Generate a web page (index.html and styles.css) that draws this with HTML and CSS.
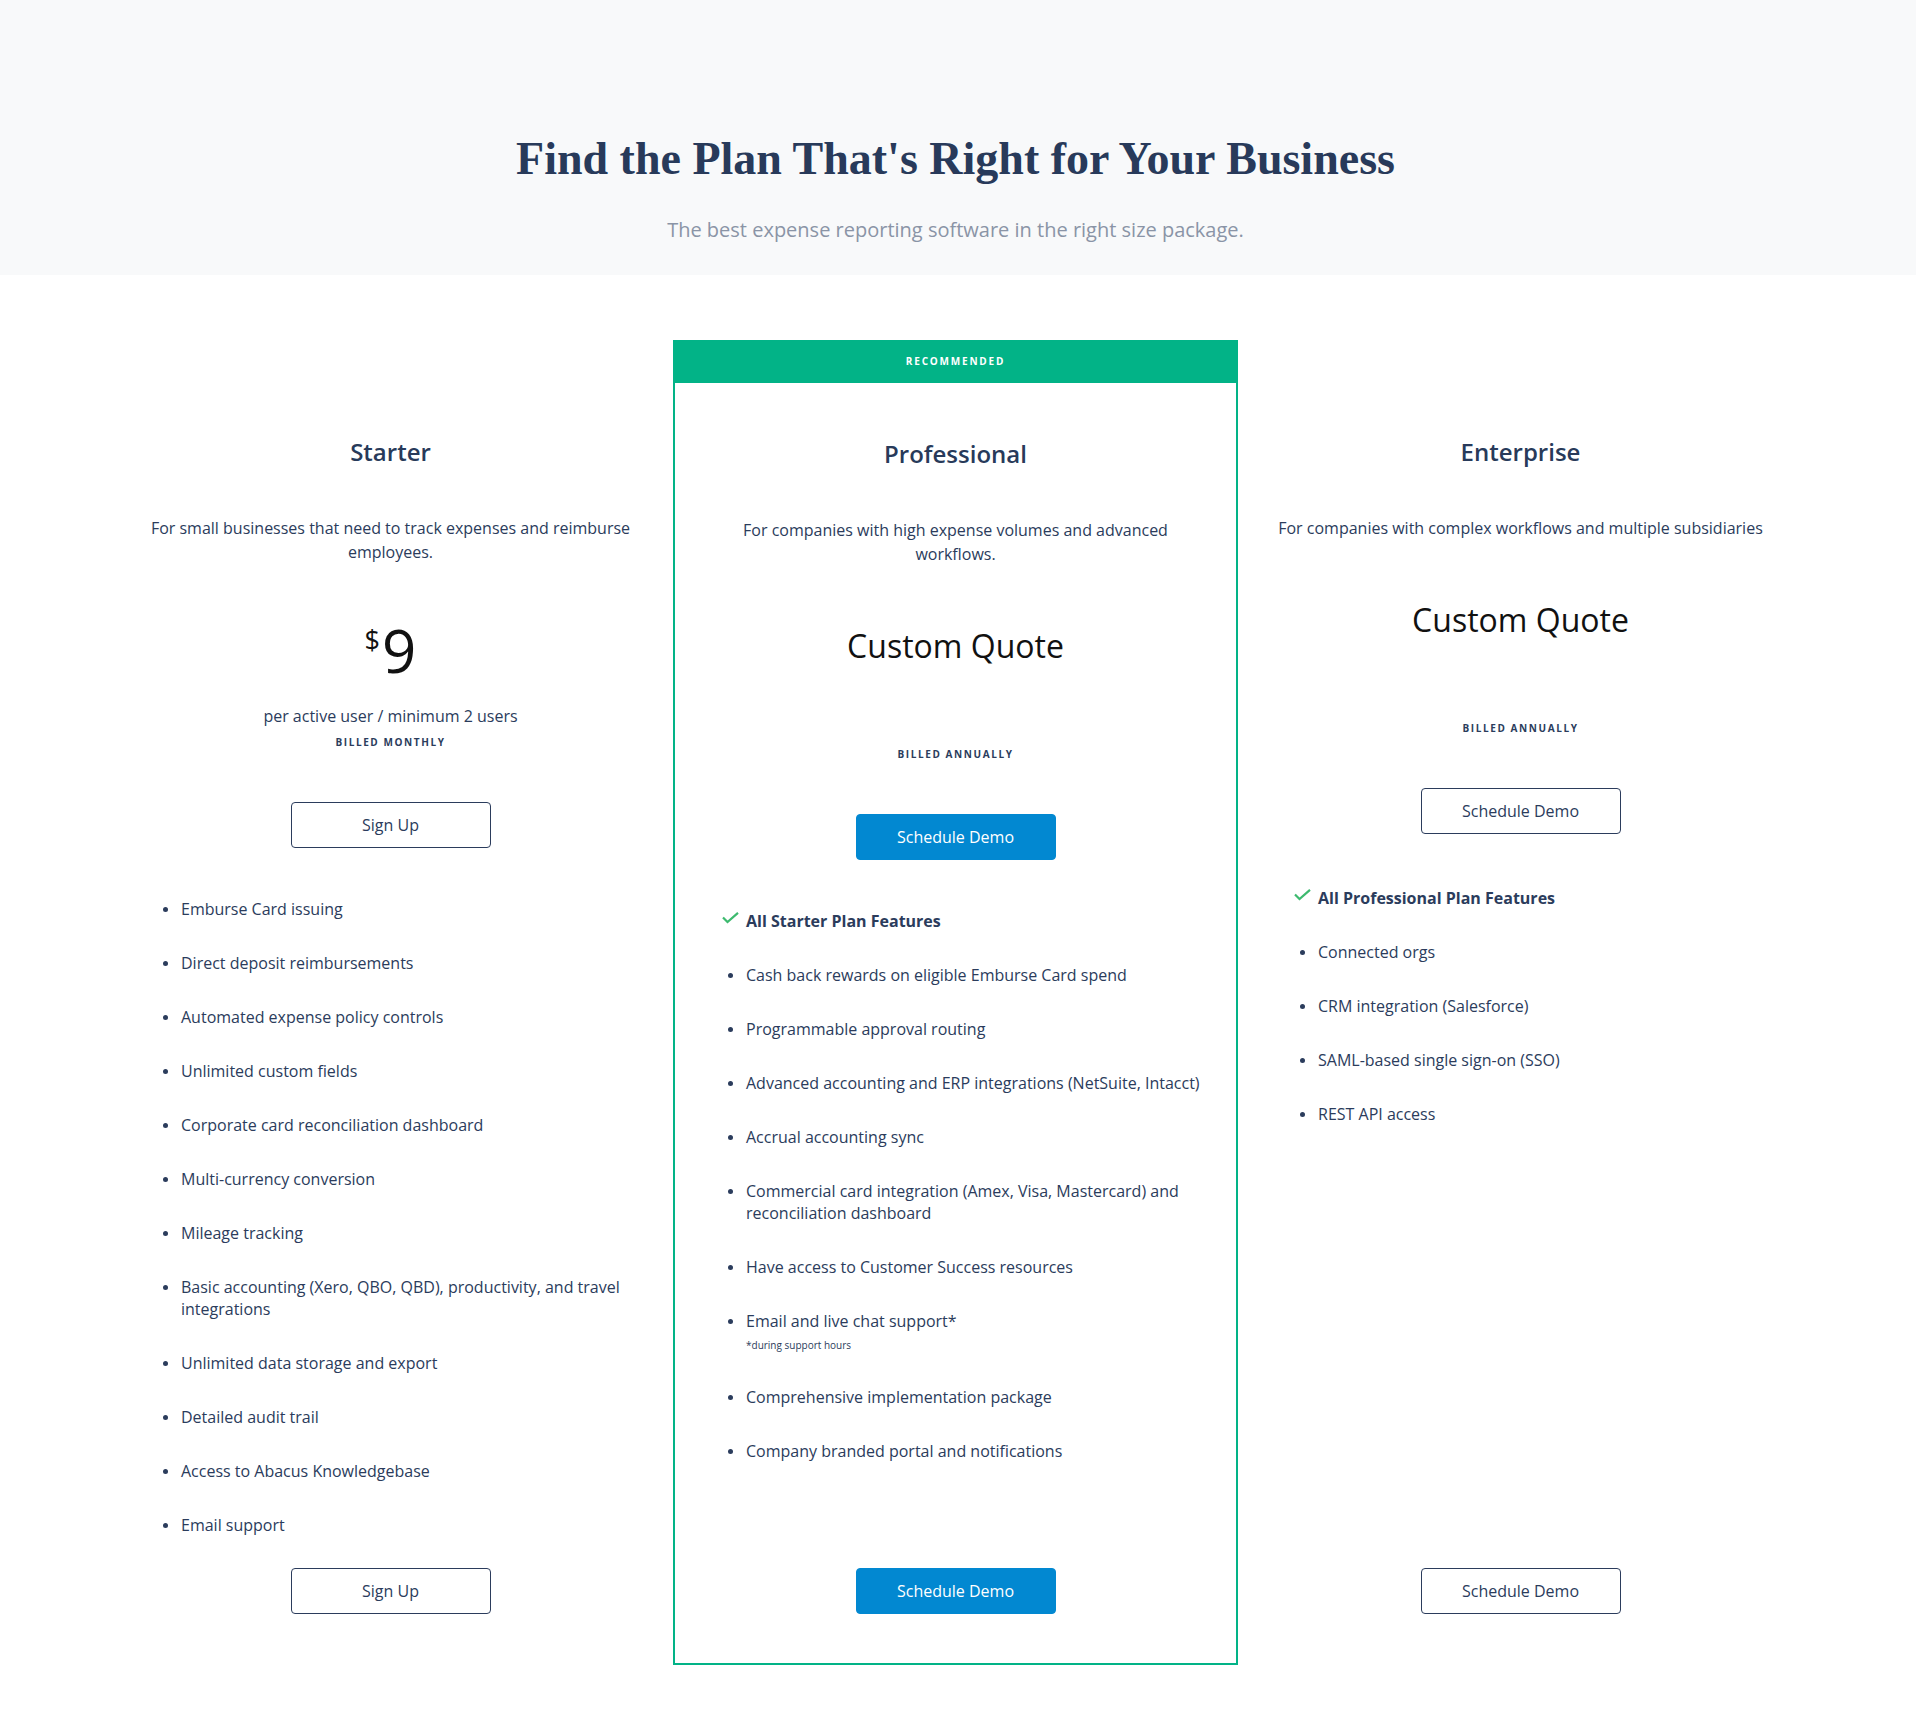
FILE: index.html
```html
<!DOCTYPE html>
<html lang="en">
<head>
  <meta charset="UTF-8" />
  <meta name="viewport" content="width=device-width, initial-scale=1.0"/>
  <title>Pricing</title>
  <link rel="stylesheet" href="styles.css">
</head>
<body>
  <header class="hero">
    <h1>Find the Plan That's Right for Your Business</h1>
    <p>The best expense reporting software in the right size package.</p>
  </header>

  <section class="plans">
    <div class="plan">
      <h2>Starter</h2>
      <p class="desc">For small businesses that need to track expenses and reimburse employees.</p>
      <div class="price"><span>$</span>9</div>
      <p class="per">per active user / minimum 2 users</p>
      <p class="billed">Billed monthly</p>
      <a class="btn" href="#">Sign Up</a>
      <ul class="features">
        <li>Emburse Card issuing</li>
        <li>Direct deposit reimbursements</li>
        <li>Automated expense policy controls</li>
        <li>Unlimited custom fields</li>
        <li>Corporate card reconciliation dashboard</li>
        <li>Multi-currency conversion</li>
        <li>Mileage tracking</li>
        <li>Basic accounting (Xero, QBO, QBD), productivity, and travel integrations</li>
        <li>Unlimited data storage and export</li>
        <li>Detailed audit trail</li>
        <li>Access to Abacus Knowledgebase</li>
        <li>Email support</li>
      </ul>
      <a class="btn" href="#">Sign Up</a>
    </div>

    <div class="plan featured">
      <div class="tag">Recommended</div>
      <h2>Professional</h2>
      <p class="desc">For companies with high expense volumes and advanced workflows.</p>
      <div class="quote">Custom Quote</div>
      <p class="billed">Billed annually</p>
      <a class="btn primary" href="#">Schedule Demo</a>
      <ul class="features">
        <li class="all">
          <svg class="check" width="17" height="12" viewBox="0 0 17 12"><path d="M1 5.5l4.5 4.5L16 0.8" fill="none" stroke="#3dba6f" stroke-width="2.2"/></svg>
          All Starter Plan Features
        </li>
        <li>Cash back rewards on eligible Emburse Card spend</li>
        <li>Programmable approval routing</li>
        <li>Advanced accounting and ERP integrations (NetSuite, Intacct)</li>
        <li>Accrual accounting sync</li>
        <li>Commercial card integration (Amex, Visa, Mastercard) and reconciliation dashboard</li>
        <li>Have access to Customer Success resources</li>
        <li><span>Email and live chat support*<small>*during support hours</small></span></li>
        <li>Comprehensive implementation package</li>
        <li>Company branded portal and notifications</li>
      </ul>
      <a class="btn primary" href="#">Schedule Demo</a>
    </div>

    <div class="plan">
      <h2>Enterprise</h2>
      <p class="desc">For companies with complex workflows and multiple subsidiaries</p>
      <div class="quote">Custom Quote</div>
      <p class="billed">Billed annually</p>
      <a class="btn" href="#">Schedule Demo</a>
      <ul class="features wide">
        <li class="all">
          <svg class="check" width="17" height="12" viewBox="0 0 17 12"><path d="M1 5.5l4.5 4.5L16 0.8" fill="none" stroke="#3dba6f" stroke-width="2.2"/></svg>
          All Professional Plan Features
        </li>
        <li>Connected orgs</li>
        <li>CRM integration (Salesforce)</li>
        <li>SAML-based single sign-on (SSO)</li>
        <li>REST API access</li>
      </ul>
      <a class="btn" href="#">Schedule Demo</a>
    </div>
  </section>
</body>
</html>
```

FILE: styles.css
```css
body {
  margin: 0;
  font-family: "Open Sans", Arial, sans-serif;
  color: #2b3c5c;
  background-color: #fff;
}

.hero {
  background-color: #f8f9fa;
  text-align: center;
  padding: 132px 25px 31px 20px;
}

.hero h1 {
  margin: 0;
  font-family: "Liberation Serif", "Times New Roman", serif;
  font-size: 46px;
  line-height: 54px;
  font-weight: 700;
  color: #283a5a;
}

.hero p {
  margin: 30px 0 0;
  font-size: 20px;
  line-height: 28px;
  color: #8a94a6;
}

.plans {
  display: grid;
  grid-template-columns: repeat(3, 565px);
  justify-content: center;
  padding: 65px 5px 52px 0;
}

.plan {
  display: flex;
  flex-direction: column;
  text-align: center;
  border: 2px solid transparent;
  padding: 41px 0 49px;
}

.plan.featured {
  border-color: #02b387;
  padding-top: 0;
}

.tag {
  height: 41px;
  line-height: 39px;
  background-color: #02b387;
  color: #fff;
  font-size: 10px;
  font-weight: 700;
  letter-spacing: 1.8px;
  text-transform: uppercase;
}

.plan h2 {
  margin: 53px 0 0;
  font-size: 24px;
  line-height: 32px;
  font-weight: 600;
  color: #283a5a;
}

.featured h2 {
  margin-top: 55px;
}

.desc {
  margin: 48px 0 0;
  padding: 0 33px;
  font-size: 16px;
  line-height: 24px;
}

.price {
  margin-top: 50px;
  font-size: 60px;
  line-height: 72px;
  color: #111;
}

.price span {
  font-size: 27px;
  line-height: 52px;
  vertical-align: top;
  margin-right: 2px;
}

.per {
  margin: 18px 0 0;
  font-size: 16px;
  line-height: 24px;
}

.quote {
  margin: 58px 0 72px;
  font-size: 32px;
  line-height: 44px;
  color: #111;
}

.billed {
  margin: 6px 0 0;
  font-size: 10px;
  line-height: 16px;
  font-weight: 700;
  letter-spacing: 1.6px;
  text-transform: uppercase;
}

.btn {
  display: block;
  box-sizing: border-box;
  width: 200px;
  height: 46px;
  margin: 52px auto 0;
  border: 1px solid #2b3c5c;
  border-radius: 4px;
  line-height: 44px;
  font-size: 16px;
  color: #2b3c5c;
  text-decoration: none;
}

.btn.primary {
  background-color: #0288d1;
  border-color: #0288d1;
  color: #fff;
}

.features {
  flex: 1;
  list-style: none;
  margin: 50px 0 0;
  padding: 0 35px 0 53px;
  text-align: left;
}

.features.wide {
  margin-top: 53px;
  padding-left: 60px;
}

.features + .btn {
  margin-top: 0;
}

.features li {
  display: flex;
  font-size: 16px;
  line-height: 22px;
  margin-bottom: 32px;
}

.features li::before {
  content: "";
  flex: none;
  width: 5px;
  height: 5px;
  border-radius: 50%;
  background-color: #2b3c5c;
  margin: 9px 13px 0 0;
}

.features li.all {
  font-weight: 700;
}

.features li.all::before {
  display: none;
}

.check {
  flex: none;
  margin: 2px 7px 0 -6px;
}

.features small {
  display: block;
  padding-top: 4px;
  font-size: 10px;
  line-height: 18px;
}
```
